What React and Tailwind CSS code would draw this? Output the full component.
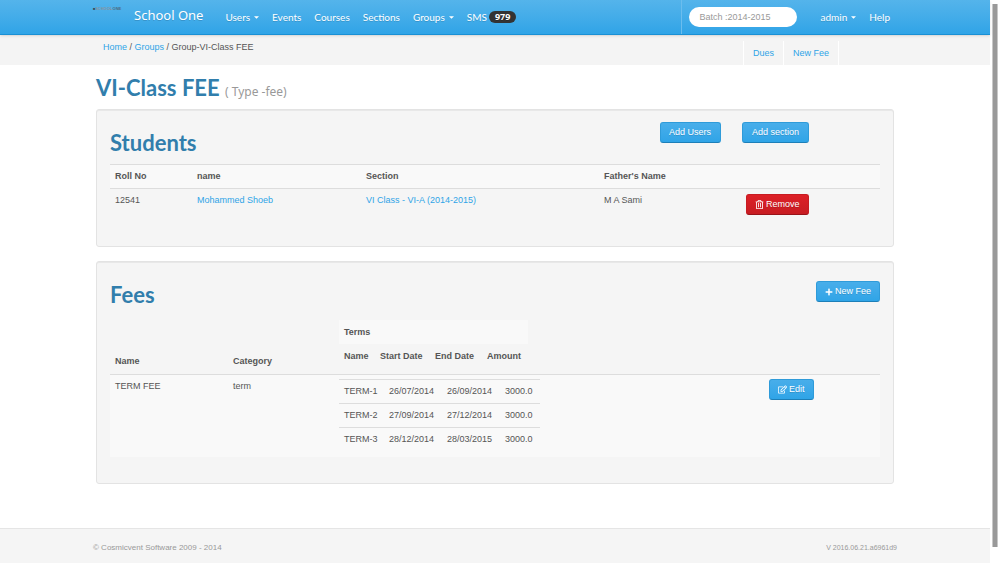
import { FaPlus, FaRegEdit, FaRegTrashAlt } from "react-icons/fa";

const students = [
  {
    rollNo: "12541",
    name: "Mohammed Shoeb",
    section: "VI Class - VI-A (2014-2015)",
    father: "M A Sami",
  },
];

const terms = [
  { name: "TERM-1", start: "26/07/2014", end: "26/09/2014", amount: "3000.0" },
  { name: "TERM-2", start: "27/09/2014", end: "27/12/2014", amount: "3000.0" },
  { name: "TERM-3", start: "28/12/2014", end: "28/03/2015", amount: "3000.0" },
];

const Caret = () => (
  <svg className="ml-1 h-[3px] w-[5px]" viewBox="0 0 6 3" fill="currentColor">
    <path d="M0 0h6L3 3z" />
  </svg>
);

const NavLink = ({ children, caret }) => (
  <a href="#" className="flex items-center px-[6px]">
    {children}
    {caret && <Caret />}
  </a>
);

const Button = ({ children, color = "blue", className = "" }) => {
  const styles = {
    blue: "bg-linear-to-b from-[#48aeea] to-[#2fa4e7] border-[#2f9bd9] border-b-[#1d7fb8]",
    red: "bg-linear-to-b from-[#dd2027] to-[#c71c22] border-[#c71c22] border-b-[#981319]",
  };

  return (
    <button
      className={`inline-flex h-[21px] items-center gap-[2px] whitespace-nowrap rounded-[3px] border px-2 text-white text-shadow-2xs ${styles[color]} ${className}`}
    >
      {children}
    </button>
  );
};

const Panel = ({ title, actions, children }) => (
  <section className="mb-[14px] rounded-[3px] border border-[#e3e3e3] bg-[#f5f5f5] px-[13px] pt-3 pb-[26px] inset-shadow-2xs">
    <div className="flex h-[42px] items-start justify-between">
      <h2 className="font-[Lato,sans-serif] text-[22px] leading-[42px] font-bold text-[#317eac]">
        {title}
      </h2>
      {actions}
    </div>
    {children}
  </section>
);

const Navbar = () => (
  <header className="relative h-[35px] border-b border-[#1990d5] bg-linear-to-b from-[#54b4eb] to-[#2fa4e7] font-[Lato,sans-serif] text-[10px] text-white shadow-sm">
    <div className="mx-auto flex h-full max-w-[804px] items-center text-shadow-2xs">
      <a
        href="#"
        className="w-7 self-start pt-[6px] font-[Liberation_Sans,sans-serif] text-[4px] leading-[5px] font-bold whitespace-nowrap text-[#8b9298] text-shadow-none"
      >
        <span className="text-[#3d4c58]">■</span>SCHOOL
        <span className="text-[#4d6b80]">ONE</span>
      </a>
      <a href="#" className="mr-4 ml-[13px] pb-[3px] font-[Noto_Sans,sans-serif] text-[13px] whitespace-nowrap">
        School One
      </a>
      <nav className="flex items-center gap-px">
        <NavLink caret>Users</NavLink>
        <NavLink>Events</NavLink>
        <NavLink>Courses</NavLink>
        <NavLink>Sections</NavLink>
        <NavLink caret>Groups</NavLink>
        <NavLink>
          SMS
          <span className="ml-[2px] rounded-full bg-[#333] px-[6px] font-[Noto_Sans,sans-serif] text-[9px] leading-3 font-bold">
            979
          </span>
        </NavLink>
      </nav>
      <div className="ml-auto flex h-full items-center gap-px border-l border-[#6bbdee] pr-px pl-[7px]">
        <input
          type="text"
          aria-label="Batch"
          defaultValue="Batch :2014-2015"
          className="mr-4 h-5 w-[108px] rounded-full bg-white px-[10px] font-[Liberation_Sans,sans-serif] text-[9px] text-[#999]"
        />
        <NavLink caret>admin</NavLink>
        <NavLink>Help</NavLink>
      </div>
    </div>
  </header>
);

const SubNav = () => (
  <div className="bg-[#f4f4f4]">
    <div className="mx-auto flex h-[30px] max-w-[798px] justify-between px-[7px]">
      <p className="pt-[6px] leading-[13px]">
        <a href="#" className="text-[#2fa4e7]">Home</a> /{" "}
        <a href="#" className="text-[#2fa4e7]">Groups</a> / Group-VI-Class FEE
      </p>
      <div className="mt-[6px] mr-12 flex border-l border-white text-[#2fa4e7]">
        <a href="#" className="flex items-center border-r border-white px-[9px] pt-[2px]">Dues</a>
        <a href="#" className="flex items-center border-r border-white px-[9px] pt-[2px]">New Fee</a>
      </div>
    </div>
  </div>
);

const StudentsTable = () => (
  <table className="w-full table-fixed text-left leading-[13px]">
    <colgroup>
      <col className="w-[82px]" />
      <col className="w-[169px]" />
      <col className="w-[238px]" />
      <col className="w-[142px]" />
      <col />
    </colgroup>
    <thead>
      <tr className="border-y border-[#ddd] bg-[#f9f9f9]">
        <th className="p-[5px]">Roll No</th>
        <th className="p-[5px]">name</th>
        <th className="p-[5px]">Section</th>
        <th className="p-[5px]">Father's Name</th>
        <th className="p-[5px]"></th>
      </tr>
    </thead>
    <tbody>
      {students.map((student) => (
        <tr key={student.rollNo} className="align-top">
          <td className="p-[5px]">{student.rollNo}</td>
          <td className="p-[5px]">
            <a href="#" className="text-[#2fa4e7]">{student.name}</a>
          </td>
          <td className="p-[5px]">
            <a href="#" className="text-[#2fa4e7]">{student.section}</a>
          </td>
          <td className="p-[5px]">{student.father}</td>
          <td className="p-[5px]">
            <Button color="red">
              <FaRegTrashAlt className="size-[9px]" />
              Remove
            </Button>
          </td>
        </tr>
      ))}
    </tbody>
  </table>
);

const FeesTable = () => (
  <table className="w-full table-fixed text-left leading-[13px]">
    <colgroup>
      <col className="w-[118px]" />
      <col className="w-[106px]" />
      <col className="w-[430px]" />
      <col />
    </colgroup>
    <thead>
      <tr className="align-bottom">
        <th className="px-[5px] pb-[6px]">Name</th>
        <th className="px-[5px] pb-[6px]">Category</th>
        <th className="px-[5px] pt-1 pb-[6px]">
          <table className="w-[189px] table-fixed">
            <colgroup>
              <col className="w-9" />
              <col className="w-[55px]" />
              <col className="w-[52px]" />
              <col />
            </colgroup>
            <thead className="align-middle whitespace-nowrap">
              <tr className="bg-[#f9f9f9]">
                <th colSpan={4} className="h-6 px-[5px]">Terms</th>
              </tr>
              <tr>
                <th className="h-6 pl-[5px]">Name</th>
                <th className="pl-[5px]">Start Date</th>
                <th className="pl-[5px]">End Date</th>
                <th className="pl-[5px]">Amount</th>
              </tr>
            </thead>
          </table>
        </th>
        <th></th>
      </tr>
    </thead>
    <tbody>
      <tr className="border-t border-[#ddd] bg-[#f9f9f9] align-top">
        <td className="p-[5px]">TERM FEE</td>
        <td className="p-[5px]">term</td>
        <td className="px-[5px] pt-1 pb-[6px]">
          <table className="w-[201px] table-fixed">
            <colgroup>
              <col className="w-[45px]" />
              <col className="w-[58px]" />
              <col className="w-[58px]" />
              <col />
            </colgroup>
            <tbody>
              {terms.map((term) => (
                <tr key={term.name} className="border-t border-[#ddd]">
                  <td className="p-[5px]">{term.name}</td>
                  <td className="p-[5px]">{term.start}</td>
                  <td className="p-[5px]">{term.end}</td>
                  <td className="p-[5px]">{term.amount}</td>
                </tr>
              ))}
            </tbody>
          </table>
        </td>
        <td className="px-[5px] pt-1">
          <Button>
            <FaRegEdit className="size-[9px]" />
            Edit
          </Button>
        </td>
      </tr>
    </tbody>
  </table>
);

const App = () => {
  return (
    <div className="flex min-h-screen bg-white font-[Liberation_Sans,Arial,sans-serif] text-[9px] text-[#555]">
      <div className="flex flex-1 flex-col">
        <Navbar />
        <SubNav />

        <main className="mx-auto w-full max-w-[798px] pb-[30px]">
          <h1 className="h-[44px] font-[Lato,sans-serif] text-[22px] leading-[46px] font-bold text-[#317eac]">
            VI-Class FEE{" "}
            <small className="font-[Noto_Sans,sans-serif] text-xs leading-none font-normal text-[#999]">
              ( Type -fee)
            </small>
          </h1>

          <Panel
            title="Students"
            actions={
              <div className="mr-[71px] flex gap-[21px]">
                <Button className="min-w-[61px]">Add Users</Button>
                <Button className="px-[9px]">Add section</Button>
              </div>
            }
          >
            <StudentsTable />
          </Panel>

          <Panel
            title="Fees"
            actions={
              <Button className="mt-[7px]">
                <FaPlus className="size-2" />
                New Fee
              </Button>
            }
          >
            <FeesTable />
          </Panel>
        </main>

        <footer className="flex-1 border-t border-[#e5e5e5] bg-[#f5f5f5] text-[#999]">
          <div className="mx-auto flex h-[34px] max-w-[804px] items-center justify-between pt-1">
            <p className="text-[8px]">© Cosmicvent Software 2009 - 2014</p>
            <p className="text-[7px]">V 2016.06.21.a6961d9</p>
          </div>
        </footer>
      </div>

      {/* Scroll track */}
      <div className="flex w-[10px] flex-col px-[2px] pt-1 pb-4">
        <div className="flex-1 border-x border-[#c8c8c8] bg-[#999]"></div>
      </div>
    </div>
  );
};

export default App;
